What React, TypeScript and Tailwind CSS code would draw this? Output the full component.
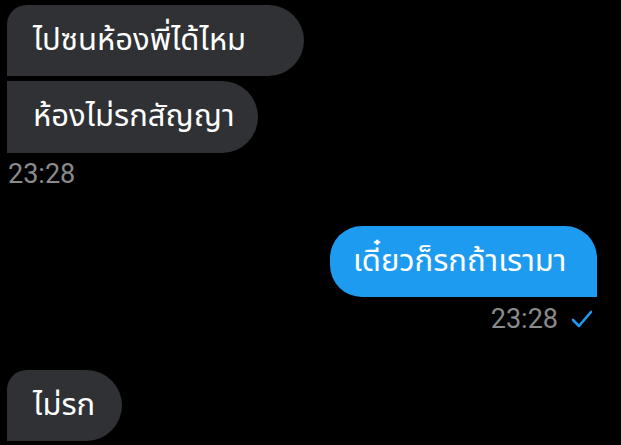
import React from "react";

const thai = { fontFamily: '"Noto Sans Thai", "Noto Sans", "Liberation Sans", sans-serif' };
const num = { fontFamily: 'Roboto, "Liberation Sans", sans-serif' };

export default function App() {
  return (
    <div className="w-[621px] h-[445px] bg-black overflow-hidden flex flex-col pl-[7px] pr-[24px] pt-[5px]" style={thai}>
      <div className="flex flex-col items-start gap-[5px]">
        <div className="h-[71px] w-[297px] bg-[#2f3134] rounded-tl-[20px] rounded-r-[36px] flex items-center pl-[26px] text-white text-[31px] leading-[40px]">
          ไปซนห้องพี่ได้ไหม
        </div>
        <div className="h-[72px] w-[251px] bg-[#2f3134] rounded-r-[36px] flex items-center pl-[26px] text-white text-[31px] leading-[40px]">
          ห้องไม่รกสัญญา
        </div>
      </div>
      <div className="mt-[7px] pl-[1px] text-[27px] leading-[28px] text-[#8a8b8c]" style={num}>
        23:28
      </div>
      <div className="mt-[38px] flex flex-col items-end">
        <div className="h-[71px] w-[267px] bg-[#1d9bf0] rounded-l-[32px] rounded-tr-[32px] flex items-center pl-[23px] text-white text-[31px] leading-[40px]">
          เดี๋ยวก็รกถ้าเรามา
        </div>
        <div className="mt-[8px] flex items-center gap-[13px] pr-[4px]">
          <span className="text-[27px] leading-[28px] text-[#8a8b8c]" style={num}>23:28</span>
          <svg width="22" height="20" viewBox="0 0 22 20" fill="none">
            <path d="M2 11 L8 17 L20 3" stroke="#1d9bf0" strokeWidth="2.6" strokeLinecap="round" strokeLinejoin="round" />
          </svg>
        </div>
      </div>
      <div className="mt-[37px] h-[71px] w-[115px] bg-[#2f3134] rounded-tl-[20px] rounded-r-[36px] flex items-center pl-[26px] text-white text-[31px] leading-[40px]">
        ไม่รก
      </div>
    </div>
  );
}
